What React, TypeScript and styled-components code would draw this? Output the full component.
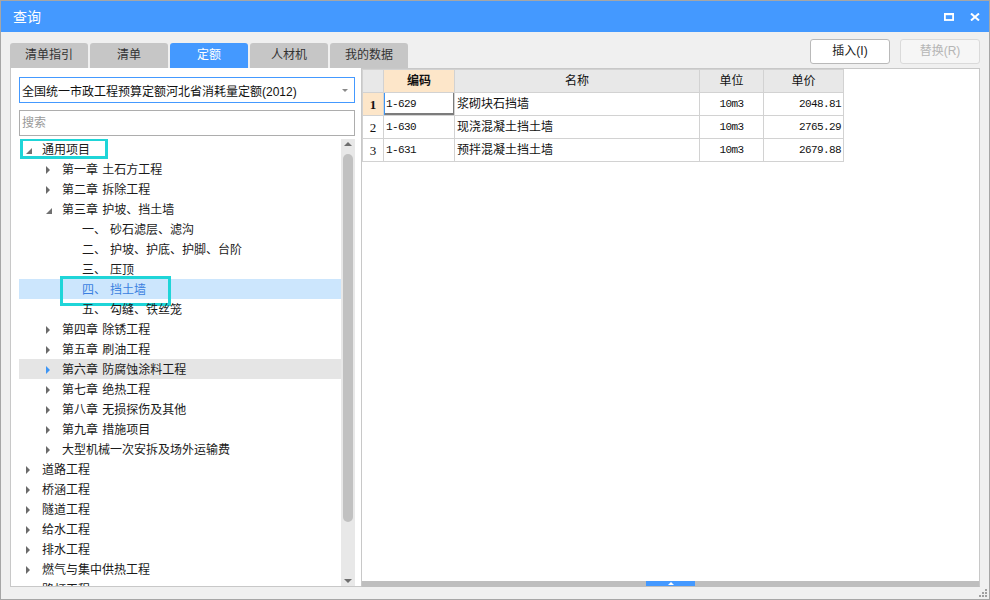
import React from "react";
import styled, { createGlobalStyle, css } from "styled-components";

const GlobalStyle = createGlobalStyle`
  html, body {
    margin: 0;
    padding: 0;
    background: #ffffff;
  }
  body {
    font-family: "Liberation Sans", "Noto Sans CJK SC", sans-serif;
    font-size: 12px;
    color: #222;
  }
  * {
    box-sizing: border-box;
  }
`;

const BLUE = "#4499ff";
const CYAN = "#1fd5d8";
const PEACH = "#fde6c9";
const MONO = `"Liberation Mono", "DejaVu Sans Mono", monospace`;

/* window frame */

const Window = styled.div`
  position: relative;
  width: 990px;
  height: 600px;
  border: 1px solid #a6a6a6;
  background: #f0f0f0;
  display: flex;
  flex-direction: column;
`;

const TitleBar = styled.div`
  flex: none;
  height: 31px;
  background: ${BLUE};
  display: flex;
  align-items: center;
  padding: 0 9px 0 12px;
`;

const Title = styled.div`
  flex: 1;
  color: #fff;
  font-size: 14px;
  line-height: 31px;
  padding-top: 2px;
`;

const TitleIcons = styled.div`
  display: flex;
  align-items: center;
  gap: 16px;
`;

const Body = styled.div`
  flex: 1;
  min-height: 0;
  display: flex;
  padding: 0 9px 12px 9px;
`;

/* left column: tabs + tree */

const LeftCol = styled.div`
  width: 351px;
  flex: none;
  display: flex;
  flex-direction: column;
`;

const TabStrip = styled.div`
  height: 36px;
  flex: none;
  display: flex;
  align-items: flex-end;
  gap: 2px;
  position: relative;
  z-index: 1;
`;

const Tab = styled.div<{ $active?: boolean }>`
  flex: none;
  width: 78px;
  height: 25px;
  border-radius: 3px 3px 0 0;
  background: ${(p) => (p.$active ? BLUE : "#c6c6c6")};
  color: ${(p) => (p.$active ? "#fff" : "#333")};
  font-size: 12px;
  line-height: 25px;
  text-align: center;
`;

const LeftPanel = styled.div`
  flex: 1;
  min-height: 0;
  background: #fff;
  border-left: 1px solid #c8c8c8;
  border-bottom: 1px solid #c8c8c8;
  padding: 9px 6px 0 8px;
  display: flex;
  flex-direction: column;
`;

const Select = styled.div`
  flex: none;
  height: 26px;
  border: 1px solid ${BLUE};
  display: flex;
  align-items: center;
  padding: 0 6px 0 2px;
  color: #111;
  font-size: 12px;
`;

const SelectText = styled.span`
  flex: 1;
`;

const Caret = styled.span<{ $dir?: "up" | "down"; $size?: number; $color?: string }>`
  width: 0;
  height: 0;
  border-left: ${(p) => (p.$size ?? 3)}px solid transparent;
  border-right: ${(p) => (p.$size ?? 3)}px solid transparent;
  ${(p) =>
    p.$dir === "up"
      ? css`border-bottom: ${Math.round((p.$size ?? 3) * 0.9)}px solid ${p.$color ?? "#888"};`
      : css`border-top: ${Math.round((p.$size ?? 3) * 0.9)}px solid ${p.$color ?? "#888"};`}
`;

const Search = styled.div`
  flex: none;
  margin-top: 7px;
  height: 26px;
  border: 1px solid #adadad;
  color: #9a9a9a;
  font-size: 12px;
  line-height: 24px;
  padding-left: 2px;
`;

const TreeArea = styled.div`
  flex: 1;
  min-height: 0;
  margin-top: 3px;
  display: flex;
  overflow: hidden;
`;

const TreeList = styled.div`
  flex: 1;
  min-width: 0;
  overflow: hidden;
`;

const Row = styled.div<{ $level: number; $selected?: boolean; $hover?: boolean }>`
  position: relative;
  height: 20px;
  display: flex;
  align-items: center;
  padding-left: ${(p) => 7 + p.$level * 20}px;
  padding-top: 2px;
  font-size: 12px;
  line-height: 18px;
  white-space: nowrap;
  color: ${(p) => (p.$selected ? "#3a7fe0" : "#1a1a1a")};
  background: ${(p) => (p.$selected ? "#cce6fd" : p.$hover ? "#e5e5e5" : "transparent")};
`;

const ArrowSlot = styled.span`
  width: 16px;
  flex: none;
  display: flex;
  align-items: center;
`;

const Collapsed = styled.span<{ $hover?: boolean }>`
  width: 0;
  height: 0;
  border-top: 4px solid transparent;
  border-bottom: 4px solid transparent;
  border-left: 4px solid ${(p) => (p.$hover ? "#3d95f5" : "#6a6a6a")};
`;

const Expanded = styled.span`
  width: 0;
  height: 0;
  margin-top: 2px;
  border-left: 6px solid transparent;
  border-bottom: 6px solid #707070;
`;

const Num = styled.span`
  margin-right: 4px;
`;

const Label = styled.span`
  word-spacing: 1px;
`;

const Marker = styled.span<{ $l: number; $t: number; $w: number; $h: number }>`
  position: absolute;
  left: ${(p) => p.$l}px;
  top: ${(p) => p.$t}px;
  width: ${(p) => p.$w}px;
  height: ${(p) => p.$h}px;
  border: 3px solid ${CYAN};
  pointer-events: none;
`;

const VScroll = styled.div`
  width: 14px;
  flex: none;
  background: #e8e8e8;
  display: flex;
  flex-direction: column;
  align-items: center;
  padding: 3px 0 3px;
`;

const Thumb = styled.div`
  width: 10px;
  height: 368px;
  margin-top: 8px;
  border-radius: 5px;
  background: #c1c1c1;
`;

const Spacer = styled.div`
  flex: 1;
`;

/* right column: buttons + grid */

const RightCol = styled.div`
  flex: 1;
  min-width: 0;
  display: flex;
  flex-direction: column;
`;

const Actions = styled.div`
  height: 36px;
  flex: none;
  display: flex;
  justify-content: flex-end;
  align-items: flex-start;
  gap: 10px;
  padding-top: 7px;
`;

const Button = styled.div<{ $disabled?: boolean }>`
  width: 80px;
  height: 25px;
  border-radius: 3px;
  border: 1px solid ${(p) => (p.$disabled ? "#dadada" : "#b9b9b9")};
  background: ${(p) => (p.$disabled ? "#f6f6f6" : "#fff")};
  color: ${(p) => (p.$disabled ? "#b5b5b5" : "#222")};
  font-size: 12px;
  line-height: 23px;
  text-align: center;
`;

const GridPanel = styled.div`
  flex: 1;
  min-height: 0;
  background: #fff;
  border: 1px solid #c8c8c8;
  border-bottom-color: #bebebe;
  display: flex;
  flex-direction: column;
`;

const Grid = styled.div`
  display: grid;
  grid-template-columns: 21px 71px 245px 64px 80px;
  grid-auto-rows: 23px;
  width: 482px;
  border-left: 1px solid #d2d2d2;
  border-top: 1px solid #d2d2d2;
`;

const Cell = styled.div<{
  $align?: "left" | "center" | "right";
  $mono?: boolean;
  $bg?: string;
  $bold?: boolean;
  $focus?: boolean;
}>`
  border-right: 1px solid #d2d2d2;
  border-bottom: 1px solid #d2d2d2;
  background: ${(p) => p.$bg ?? "#fff"};
  text-align: ${(p) => p.$align ?? "left"};
  padding: 0 2px;
  line-height: 22px;
  white-space: nowrap;
  overflow: hidden;
  color: #111;
  font-weight: ${(p) => (p.$bold ? 700 : 400)};
  ${(p) =>
    p.$mono &&
    css`
      font-family: ${MONO};
      font-size: 11px;
      letter-spacing: -0.6px;
    `}
  ${(p) =>
    p.$focus &&
    css`
      box-shadow: inset 1px 0 0 #3d95f5, inset -1px 0 0 #7c7c7c, inset 0 -2px 0 #7c7c7c;
    `}
`;

const HeadCell = styled(Cell)`
  font-size: 12px;
`;

const RowNo = styled(Cell)`
  font-family: "Liberation Serif", serif;
  font-size: 13px;
  padding: 0;
  line-height: 23px;
`;

const Splitter = styled.div`
  margin-top: auto;
  height: 5px;
  flex: none;
  background: #bebebe;
  display: flex;
  justify-content: center;
`;

const Handle = styled.div`
  width: 49px;
  background: ${BLUE};
  display: flex;
  align-items: center;
  justify-content: center;
`;

const Grip = styled.svg`
  position: absolute;
  right: 1px;
  bottom: 1px;
`;

type Node = {
  level: number;
  kind?: "open" | "closed";
  num?: string;
  text: string;
  selected?: boolean;
  hover?: boolean;
  mark?: { l: number; t: number; w: number; h: number };
};

const tree: Node[] = [
  { level: 0, kind: "open", text: "通用项目", mark: { l: 1, t: -1, w: 88, h: 21 } },
  { level: 1, kind: "closed", text: "第一章 土石方工程" },
  { level: 1, kind: "closed", text: "第二章 拆除工程" },
  { level: 1, kind: "open", text: "第三章 护坡、挡土墙" },
  { level: 2, num: "一、", text: "砂石滤层、滤沟" },
  { level: 2, num: "二、", text: "护坡、护底、护脚、台阶" },
  { level: 2, num: "三、", text: "压顶" },
  { level: 2, num: "四、", text: "挡土墙", selected: true, mark: { l: 41, t: -3, w: 111, h: 30 } },
  { level: 2, num: "五、", text: "勾缝、铁丝笼" },
  { level: 1, kind: "closed", text: "第四章 除锈工程" },
  { level: 1, kind: "closed", text: "第五章 刷油工程" },
  { level: 1, kind: "closed", text: "第六章 防腐蚀涂料工程", hover: true },
  { level: 1, kind: "closed", text: "第七章 绝热工程" },
  { level: 1, kind: "closed", text: "第八章 无损探伤及其他" },
  { level: 1, kind: "closed", text: "第九章 措施项目" },
  { level: 1, kind: "closed", text: "大型机械一次安拆及场外运输费" },
  { level: 0, kind: "closed", text: "道路工程" },
  { level: 0, kind: "closed", text: "桥涵工程" },
  { level: 0, kind: "closed", text: "隧道工程" },
  { level: 0, kind: "closed", text: "给水工程" },
  { level: 0, kind: "closed", text: "排水工程" },
  { level: 0, kind: "closed", text: "燃气与集中供热工程" },
  { level: 0, kind: "closed", text: "路灯工程" },
];

const rows = [
  { code: "1-629", name: "浆砌块石挡墙", unit: "10m3", price: "2048.81" },
  { code: "1-630", name: "现浇混凝土挡土墙", unit: "10m3", price: "2765.29" },
  { code: "1-631", name: "预拌混凝土挡土墙", unit: "10m3", price: "2679.88" },
];

const tabs = ["清单指引", "清单", "定额", "人材机", "我的数据"];

export default function App() {
  return (
    <>
      <GlobalStyle />
      <Window>
        <TitleBar>
          <Title>查询</Title>
          <TitleIcons>
            <svg width="10" height="8" viewBox="0 0 10 8">
              <rect x="0.9" y="1.1" width="8.2" height="5.9" fill="none" stroke="#fff" strokeWidth="1.8" />
              <rect x="0" y="0" width="10" height="2.2" fill="#fff" />
            </svg>
            <svg width="10" height="8" viewBox="0 0 10 8">
              <path d="M1 0.5 L9 7.5 M9 0.5 L1 7.5" stroke="#fff" strokeWidth="2" />
            </svg>
          </TitleIcons>
        </TitleBar>

        <Body>
          <LeftCol>
            <TabStrip>
              {tabs.map((t) => (
                <Tab key={t} $active={t === "定额"}>
                  {t}
                </Tab>
              ))}
            </TabStrip>
            <LeftPanel>
              <Select>
                <SelectText>全国统一市政工程预算定额河北省消耗量定额(2012)</SelectText>
                <Caret $dir="down" $size={3} $color="#8a8a8a" />
              </Select>
              <Search>搜索</Search>
              <TreeArea>
                <TreeList>
                  {tree.map((n, i) => (
                    <Row key={i} $level={n.level} $selected={n.selected} $hover={n.hover}>
                      <ArrowSlot>
                        {n.kind === "open" && <Expanded />}
                        {n.kind === "closed" && <Collapsed $hover={n.hover} />}
                      </ArrowSlot>
                      {n.num && <Num>{n.num}</Num>}
                      <Label>{n.text}</Label>
                      {n.mark && <Marker $l={n.mark.l} $t={n.mark.t} $w={n.mark.w} $h={n.mark.h} />}
                    </Row>
                  ))}
                </TreeList>
                <VScroll>
                  <Caret $dir="up" $size={4} $color="#6e6e6e" />
                  <Thumb />
                  <Spacer />
                  <Caret $dir="down" $size={4} $color="#6e6e6e" />
                </VScroll>
              </TreeArea>
            </LeftPanel>
          </LeftCol>

          <RightCol>
            <Actions>
              <Button>插入(I)</Button>
              <Button $disabled>替换(R)</Button>
            </Actions>
            <GridPanel>
              <Grid>
                <HeadCell $bg="#e8e8e8" />
                <HeadCell $bg={PEACH} $align="center" $bold>
                  编码
                </HeadCell>
                <HeadCell $bg="#e8e8e8" $align="center">
                  名称
                </HeadCell>
                <HeadCell $bg="#e8e8e8" $align="center">
                  单位
                </HeadCell>
                <HeadCell $bg="#e8e8e8" $align="center">
                  单价
                </HeadCell>
                {rows.map((r, i) => (
                  <React.Fragment key={r.code}>
                    <RowNo $align="center" $bg={i === 0 ? PEACH : "#fff"} $bold={i === 0}>
                      {i + 1}
                    </RowNo>
                    <Cell $mono $focus={i === 0}>
                      {r.code}
                    </Cell>
                    <Cell>{r.name}</Cell>
                    <Cell $mono $align="center">
                      {r.unit}
                    </Cell>
                    <Cell $mono $align="right">
                      {r.price}
                    </Cell>
                  </React.Fragment>
                ))}
              </Grid>
              <Splitter>
                <Handle>
                  <Caret $dir="up" $size={3} $color="#fff" />
                </Handle>
              </Splitter>
            </GridPanel>
          </RightCol>
        </Body>

        <Grip width="10" height="10" viewBox="0 0 10 10">
          <g fill="#a0a0a0">
            <rect x="7" y="1" width="2" height="2" />
            <rect x="4" y="4" width="2" height="2" />
            <rect x="7" y="4" width="2" height="2" />
            <rect x="1" y="7" width="2" height="2" />
            <rect x="4" y="7" width="2" height="2" />
            <rect x="7" y="7" width="2" height="2" />
          </g>
        </Grip>
      </Window>
    </>
  );
}
